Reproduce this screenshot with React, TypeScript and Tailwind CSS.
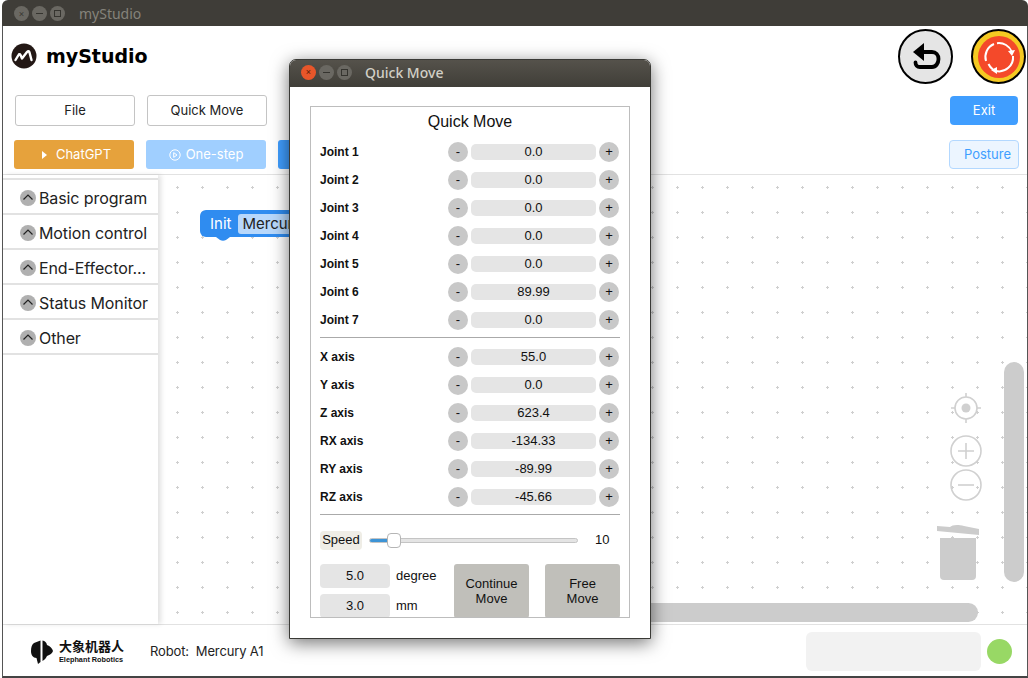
const sans = "font-['Inter','Noto_Sans_CJK_SC',sans-serif]";
const cjk = "font-['Noto_Sans_CJK_SC','Noto_Sans',sans-serif]";

const joints = [
  ['Joint 1', '0.0'],
  ['Joint 2', '0.0'],
  ['Joint 3', '0.0'],
  ['Joint 4', '0.0'],
  ['Joint 5', '0.0'],
  ['Joint 6', '89.99'],
  ['Joint 7', '0.0'],
];

const axes = [
  ['X axis', '55.0'],
  ['Y axis', '0.0'],
  ['Z axis', '623.4'],
  ['RX axis', '-134.33'],
  ['RY axis', '-89.99'],
  ['RZ axis', '-45.66'],
];

const categories = ['Basic program', 'Motion control', 'End-Effector...', 'Status Monitor', 'Other'];

function WinButtons({ active }: { active?: boolean }) {
  return (
    <div className="flex items-center gap-[3px]">
      <div
        className={`flex h-[15px] w-[15px] items-center justify-center rounded-full text-[9px] leading-none ${
          active ? 'bg-[#e8562a] text-[#5a1c08]' : 'bg-[#6a6862] text-[#3a3934]'
        }`}
      >
        ×
      </div>
      <div className="flex h-[15px] w-[15px] items-center justify-center rounded-full bg-[#6a6862]">
        <div className="h-px w-[7px] bg-[#35342f]" />
      </div>
      <div className="flex h-[15px] w-[15px] items-center justify-center rounded-full bg-[#6a6862]">
        <div className="h-[7px] w-[7px] border border-[#35342f]" />
      </div>
    </div>
  );
}

function LogoMark() {
  return (
    <svg width="26" height="26" viewBox="0 0 26 26">
      <circle cx="13" cy="13" r="12.5" fill="#231815" />
      <path d="M4.5 17 L7.5 12 C8 11 9 11 9.5 12 L11 15.5 L16 9 C17 8 18 8 18.5 9.5 L20.5 17" fill="none" stroke="#fff" strokeWidth="2.4" strokeLinejoin="round" strokeLinecap="round" />
    </svg>
  );
}

function UndoIcon() {
  return (
    <svg width="30" height="30" viewBox="0 0 30 30">
      <path d="M2 10 L13 1 L13 19 Z" fill="#000" />
      <path d="M11 10 H21 C25 10 27.5 13 27.5 17 C27.5 21 25 25 21 25 H9 C6 25 4.5 23 4.5 20.5" fill="none" stroke="#000" strokeWidth="3.8" strokeLinecap="round" />
    </svg>
  );
}

function ResetIcon() {
  return (
    <svg width="34" height="34" viewBox="0 0 34 34">
      <path d="M4 21 A14 14 0 0 1 12 4" fill="none" stroke="#fff" strokeWidth="2" />
      <path d="M15 3.2 A14 14 0 0 1 30 12" fill="none" stroke="#fff" strokeWidth="2" />
      <path d="M31 16 A14 14 0 0 1 14 31" fill="none" stroke="#fff" strokeWidth="2" />
      <path d="M26 11 L33 10 L30 16 Z" fill="#fff" />
      <path d="M15 27 L15 34 L9 30 Z" fill="#fff" />
      <path d="M6.5 24 A14 14 0 0 0 11 29.5" fill="none" stroke="#fff" strokeWidth="2" />
    </svg>
  );
}

function ElephantLogo() {
  return (
    <div className="flex items-center gap-[6px]">
      <svg width="22" height="24" viewBox="0 0 22 24">
        <path d="M3 3 L9.5 0.5 L9.5 22 L7 24 L5.5 18 C2 18 0 15 0 11 C0 7 1 4.5 3 3 Z" fill="#111" />
        <path d="M11.5 0.5 C14 1 15.5 2.5 16 5 C19 6 21.5 8.5 22 11 C21.5 13 19 15 16 16 C15 18 13.5 20 11.5 21 Z" fill="#111" />
      </svg>
      <div className="flex w-[66px] flex-col leading-none text-[#111]">
        <span className={`${cjk} text-[13px] leading-[16px] font-bold whitespace-nowrap`}>大象机器人</span>
        <span className="font-['Liberation_Sans',sans-serif] text-[7.3px] leading-[11px] font-bold whitespace-nowrap">Elephant Robotics</span>
      </div>
    </div>
  );
}

function ValueRow({ label, value }: { label: string; value: string }) {
  return (
    <div className="flex h-[28px] items-center">
      <span className="w-[128px] text-[12px] font-bold text-[#111]">{label}</span>
      <div className="flex h-[20px] w-[20px] items-center justify-center rounded-full bg-[#c8c8c8] text-[13px] text-[#111]">-</div>
      <div className="mx-[3px] flex h-[16px] w-[125px] items-center justify-center rounded-[5px] bg-[#e5e5e5] text-[13px] text-[#111]">
        {value}
      </div>
      <div className="flex h-[20px] w-[20px] items-center justify-center rounded-full bg-[#c8c8c8] text-[13px] text-[#111]">+</div>
    </div>
  );
}

function QuickMove() {
  return (
    <div className="absolute top-[59px] left-[289px] flex h-[580px] w-[362px] flex-col overflow-hidden rounded-t-[7px] border border-[#3a3a36] bg-white font-['Liberation_Sans',sans-serif] shadow-[0_4px_18px_rgba(0,0,0,0.55)]">
      <div className="flex h-[27px] shrink-0 items-center bg-gradient-to-b from-[#55524b] to-[#403e38] pb-[2px] pl-[11px]">
        <WinButtons active />
        <span className="ml-[13px] font-['Noto_Sans',sans-serif] text-[14px] font-medium text-[#d2cfc6]">Quick Move</span>
      </div>
      <div className="mx-[20px] mt-[19px] h-[512px] overflow-hidden border border-[#bdbdbd] px-[9px]">
        <div className="h-[29px] pt-[5px] text-center text-[16px] leading-[20px] text-[#111]">Quick Move</div>
        <div className="mt-[2px]">
          {joints.map(([label, value]) => (
            <ValueRow key={label} label={label} value={value} />
          ))}
        </div>
        <div className="mt-[3px] mb-[5px] h-px bg-[#aaa]" />
        {axes.map(([label, value]) => (
          <ValueRow key={label} label={label} value={value} />
        ))}
        <div className="mt-[3px] h-px bg-[#aaa]" />
        <div className="mt-[15px] flex h-[20px] items-center">
          <div className="flex h-[19px] w-[42px] items-center justify-center rounded-[4px] bg-[#efede6] text-[13px] text-[#111]">Speed</div>
          <div className="relative ml-[7px] h-[5px] w-[209px] rounded-full border border-[#c4c4c4] bg-[#e4e4e4]">
            <div className="h-full w-[20px] rounded-full bg-[#3d94d6]" />
            <div className="absolute top-[-6px] left-[17px] h-[15px] w-[14px] rounded-[4px] border border-[#b5b5b5] bg-white" />
          </div>
          <span className="ml-[17px] text-[13px] text-[#111]">10</span>
        </div>
        <div className="mt-[14px] flex text-[13px] text-[#111]">
          <div className="flex w-[134px] flex-col gap-[6px]">
            <div className="flex items-center">
              <div className="flex h-[24px] w-[70px] items-center justify-center rounded-[4px] bg-[#e5e5e5]">5.0</div>
              <span className="ml-[6px]">degree</span>
            </div>
            <div className="flex items-center">
              <div className="flex h-[24px] w-[70px] items-center justify-center rounded-[4px] bg-[#e5e5e5]">3.0</div>
              <span className="ml-[6px]">mm</span>
            </div>
          </div>
          <div className="flex h-[54px] w-[75px] items-center justify-center rounded-[3px] bg-[#c0bfba] text-center leading-[15px]">
            Continue
            <br />
            Move
          </div>
          <div className="ml-[16px] flex h-[54px] w-[75px] items-center justify-center rounded-[3px] bg-[#c0bfba] text-center leading-[15px]">
            Free
            <br />
            Move
          </div>
        </div>
      </div>
    </div>
  );
}

function CanvasControls() {
  return (
    <>
      <svg className="absolute top-[215px] left-[790px]" width="36" height="36" viewBox="0 0 36 36" fill="none" stroke="#d0d0d0" strokeWidth="1.6">
        <circle cx="18" cy="18" r="11" />
        <circle cx="18" cy="18" r="4.5" fill="#d0d0d0" stroke="none" />
        <path d="M18 3 V7 M18 29 V33 M3 18 H7 M29 18 H33" />
      </svg>
      <svg className="absolute top-[260px] left-[791px]" width="34" height="66" viewBox="0 0 34 66" fill="none" stroke="#d0d0d0" strokeWidth="1.6">
        <circle cx="17" cy="16" r="15" />
        <path d="M9 16 H25 M17 8 V24" />
        <circle cx="17" cy="50" r="15" />
        <path d="M9 50 H25" />
      </svg>
      <svg className="absolute top-[349px] left-[778px]" width="46" height="58" viewBox="0 0 46 58" fill="#cccccc">
        <path d="M1 2 L14 3 C16 1 21 0 28 2 L43 5 L43 11 L1 7 Z" />
        <path d="M4 14 H40 V52 Q40 56 36 56 H8 Q4 56 4 52 Z" />
      </svg>
      <div className="absolute top-[187px] right-[3px] h-[220px] w-[20px] rounded-full bg-[#cccccc]" />
      <div className="absolute right-[49px] bottom-[2px] left-[312px] h-[19px] rounded-full bg-[#cccccc]" />
    </>
  );
}

export default function App() {
  return (
    <div className={`relative flex h-[678px] w-[1028px] flex-col overflow-hidden bg-white ${sans} text-[#222]`}>
      <div className="ml-[2px] flex h-[26px] shrink-0 items-center rounded-t-[6px] bg-[#3f3d38] pl-[12px]">
        <WinButtons />
        <span className="ml-[14px] font-['Noto_Sans',sans-serif] text-[14px] text-[#85837b]">myStudio</span>
      </div>
      <div className="ml-[2px] flex min-h-0 flex-1 flex-col border-x border-b-2 border-x-[#555] border-b-[#444]">
        <div className="relative h-[149px] shrink-0 border-b border-[#e2e2e2]">
          <div className="flex items-center gap-[9px] pt-[17px] pl-[8px]">
            <LogoMark />
            <span className="font-['DejaVu_Sans',sans-serif] text-[19px] leading-[26px] font-bold text-black">myStudio</span>
          </div>
          <div className="mt-[26px] flex items-center pr-[9px] pl-[12px] text-[13px]">
            <div className="flex h-[31px] w-[120px] items-center justify-center rounded-[3px] border border-[#c4c4c4]">File</div>
            <div className="ml-[12px] flex h-[31px] w-[120px] items-center justify-center rounded-[3px] border border-[#c4c4c4]">Quick Move</div>
            <div className="ml-auto flex h-[29px] w-[68px] items-center justify-center rounded-[4px] bg-[#409eff] text-white">Exit</div>
          </div>
          <div className="mt-[14px] flex items-center pr-[8px] pl-[11px] text-[13px] text-white">
            <div className="flex h-[29px] w-[120px] items-center justify-center gap-[9px] rounded-[3px] bg-[#e6a23c] pl-[5px]">
              <span className="h-0 w-0 border-y-[4px] border-l-[5px] border-y-transparent border-l-white" />
              ChatGPT
            </div>
            <div className="ml-[12px] flex h-[29px] w-[120px] items-center justify-center gap-[5px] rounded-[3px] bg-[#a0cfff]">
              <svg width="12" height="12" viewBox="0 0 12 12" fill="none" stroke="#fff">
                <circle cx="6" cy="6" r="5.2" />
                <path d="M4.7 3.6 L8 6 L4.7 8.4 Z" />
              </svg>
              One-step
            </div>
            <div className="ml-[12px] h-[29px] w-[60px] rounded-[3px] bg-[#409eff]" />
            <div className="ml-auto flex h-[29px] w-[70px] items-center justify-end rounded-[4px] border border-[#b3d8ff] bg-[#ecf5ff] pr-[7px] text-[#409eff]">Posture</div>
          </div>
          <div className="absolute top-[3px] right-[1px] flex items-center gap-[18px]">
            <div className="flex h-[55px] w-[55px] items-center justify-center rounded-full border-2 border-black bg-[#e5e5e5]">
              <UndoIcon />
            </div>
            <div className="flex h-[55px] w-[55px] items-center justify-center rounded-full border-2 border-black bg-[#f5c922]">
              <div className="flex h-[42px] w-[42px] items-center justify-center rounded-full bg-[#f4492a]">
                <ResetIcon />
              </div>
            </div>
          </div>
        </div>
        <div className="flex h-[450px] shrink-0 border-b border-[#e2e2e2]">
          <div className="z-10 w-[155px] shrink-0 pt-[3px] shadow-[3px_0_5px_rgba(0,0,0,0.12)]">
            {categories.map((name) => (
              <div key={name} className="flex h-[35px] items-center gap-[3px] border-t-2 border-[#e2e2e2] pt-[2px] pl-[17px] text-[16px] tracking-[-0.1px] whitespace-nowrap text-[#222]">
                <svg width="16" height="16" viewBox="0 0 16 16" className="shrink-0">
                  <circle cx="8" cy="8" r="8" fill="#b0b0b0" />
                  <path d="M3.5 9.5 L8 5 L12.5 9.5" fill="none" stroke="#222" strokeWidth="1.2" />
                </svg>
                {name}
              </div>
            ))}
            <div className="border-t-2 border-[#e2e2e2]" />
          </div>
          <div className="relative flex-1 overflow-hidden">
            <svg className="absolute inset-0 h-full w-full">
              <defs>
                <pattern id="dots" x="18" y="11" width="25" height="25" patternUnits="userSpaceOnUse">
                  <path d="M0 1.5 H3 M1.5 0 V3" stroke="#cfcfcf" strokeWidth="1" />
                </pattern>
              </defs>
              <rect width="100%" height="100%" fill="url(#dots)" />
            </svg>
            <div className="absolute top-[35px] left-[42px] flex h-[27px] w-[110px] items-center rounded-[6px] bg-[#2f8cf0] pt-px pl-[10px] text-[15px] text-white">
              Init
              <span className="ml-[7px] rounded-[3px] bg-[#b8d8fb] px-[4px] text-[15px] leading-[20px] whitespace-nowrap text-[#222]">Mercury</span>
              <svg className="absolute -bottom-[4px] left-[16px]" width="14" height="4" viewBox="0 0 14 4" fill="#2f8cf0">
                <path d="M0 0 H14 L10 3 Q7 4.5 4 3 Z" />
              </svg>
            </div>
            <CanvasControls />
          </div>
        </div>
        <div className="flex flex-1 items-center pt-[2px] pr-[15px] pl-[28px]">
          <ElephantLogo />
          <span className="ml-[25px] text-[13px] tracking-[-0.15px] whitespace-pre text-[#222]">Robot:  Mercury A1</span>
          <div className="ml-auto h-[39px] w-[175px] rounded-[6px] bg-[#f2f2f2]" />
          <div className="ml-[6px] h-[25px] w-[25px] rounded-full bg-[#98d865]" />
        </div>
      </div>
      <QuickMove />
    </div>
  );
}
